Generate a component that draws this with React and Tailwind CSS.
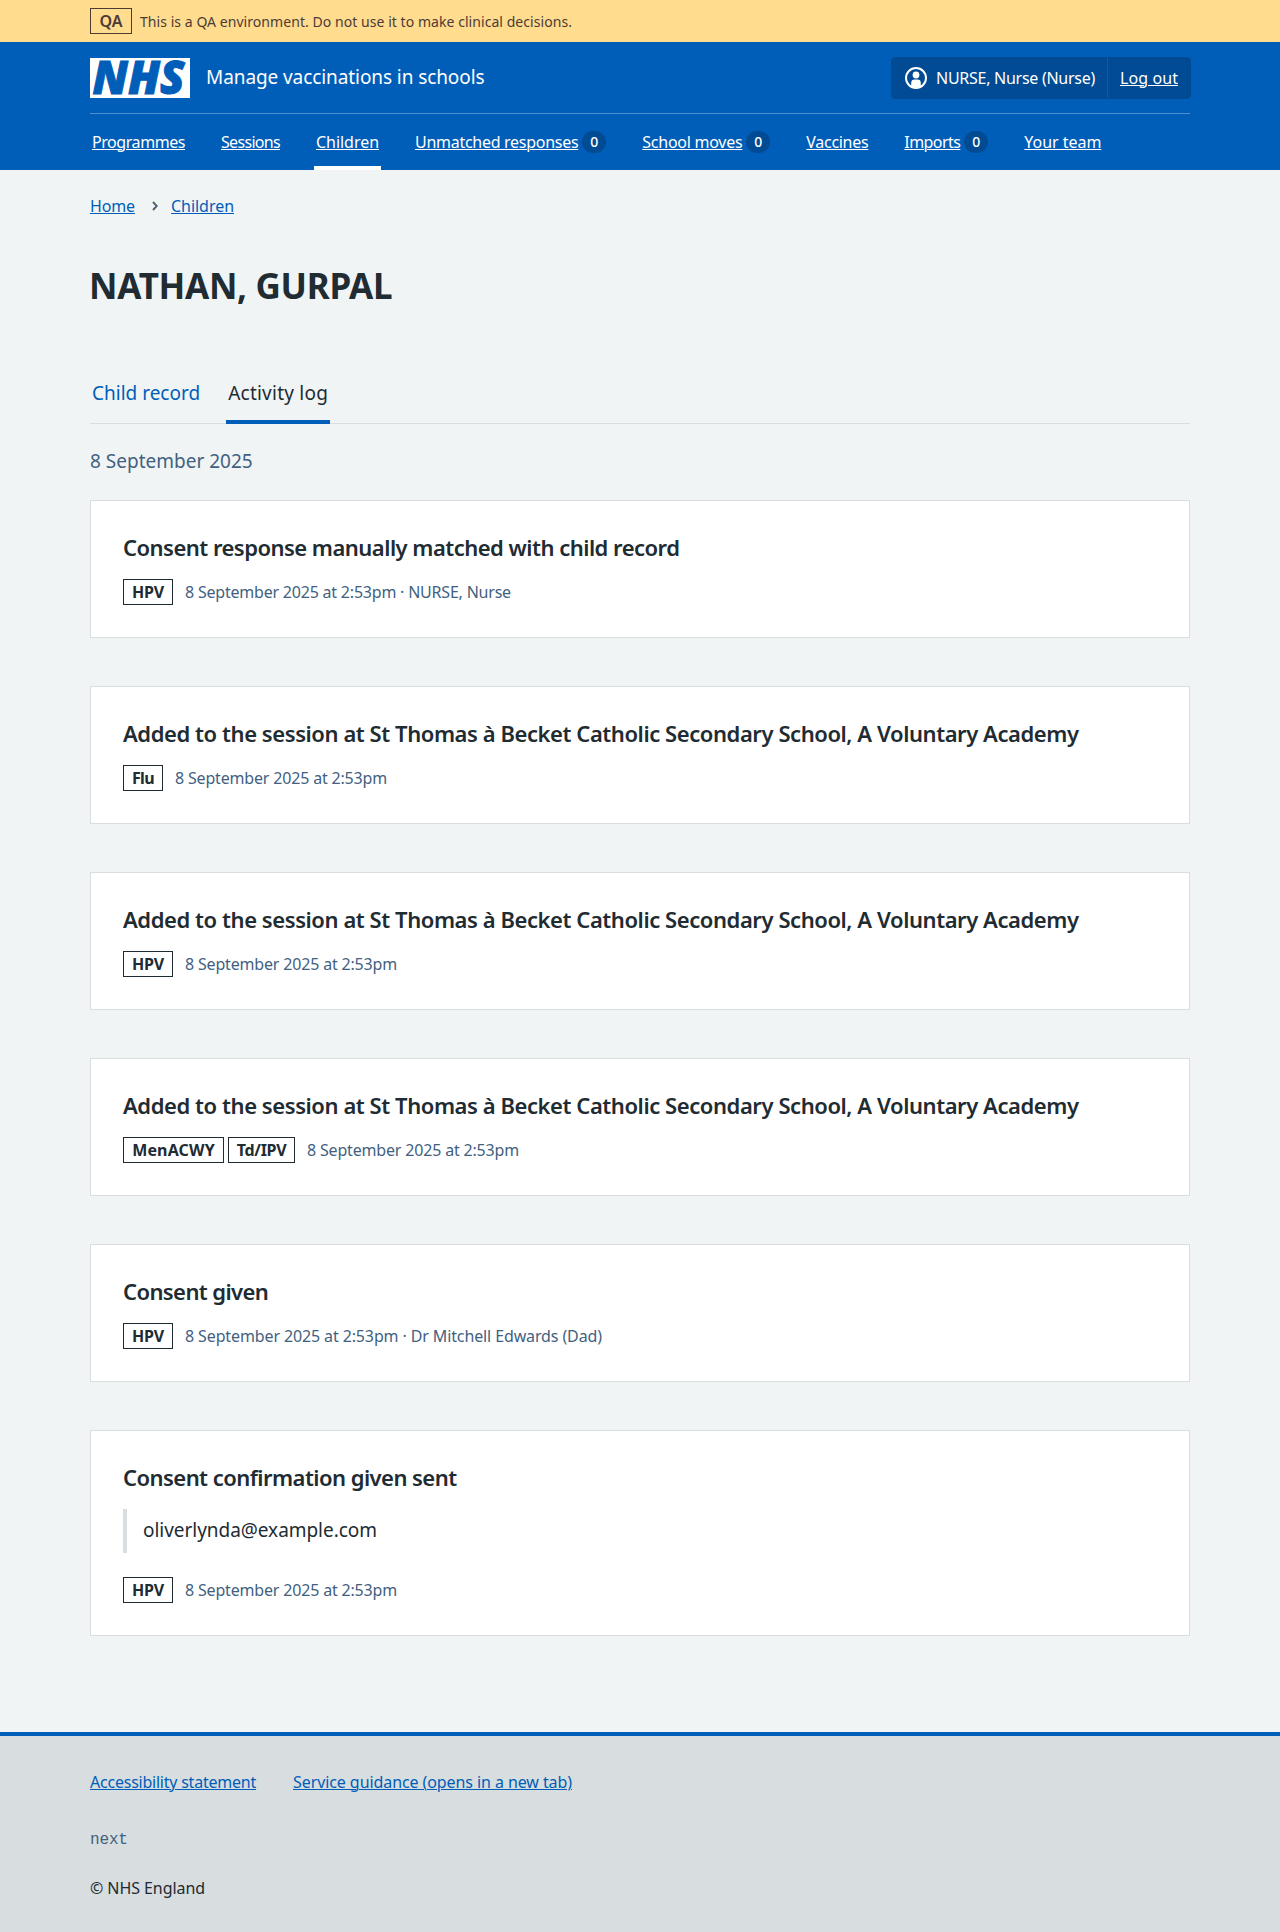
import React from "react";

const navItems = [
  { label: "Programmes", tracking: "tracking-[-0.0273em]" },
  { label: "Sessions", tracking: "tracking-[-0.043em]" },
  { label: "Children", tracking: "tracking-[-0.0023em]", active: true },
  { label: "Unmatched responses", tracking: "tracking-[-0.0175em]", count: 0 },
  { label: "School moves", tracking: "tracking-[-0.0164em]", count: 0 },
  { label: "Vaccines", tracking: "tracking-[-0.0182em]" },
  { label: "Imports", tracking: "tracking-[-0.0353em]", count: 0 },
  { label: "Your team", tracking: "tracking-[-0.0024em]" },
];

const HPV = { label: "HPV", className: "w-[50px] tracking-[-0.015em]" };
const FLU = { label: "Flu", className: "w-[40px] tracking-[-0.04em]" };
const MENACWY = { label: "MenACWY", className: "w-[101px] tracking-[0.01em]" };
const TDIPV = { label: "Td/IPV", className: "w-[67px] tracking-[-0.02em]" };

const SESSION_TITLE =
  "Added to the session at St Thomas à Becket Catholic Secondary School, A Voluntary Academy";
const TIME = "8 September 2025 at 2:53pm";

const entries = [
  {
    title: "Consent response manually matched with child record",
    titleTracking: "tracking-[-0.0236em]",
    tags: [HPV],
    meta: `${TIME} · NURSE, Nurse`,
    metaTracking: "tracking-[-0.013em]",
  },
  {
    title: SESSION_TITLE,
    titleTracking: "tracking-[-0.0196em]",
    tags: [FLU],
    meta: TIME,
    metaTracking: "tracking-[-0.011em]",
  },
  {
    title: SESSION_TITLE,
    titleTracking: "tracking-[-0.0196em]",
    tags: [HPV],
    meta: TIME,
    metaTracking: "tracking-[-0.011em]",
  },
  {
    title: SESSION_TITLE,
    titleTracking: "tracking-[-0.0196em]",
    tags: [MENACWY, TDIPV],
    meta: TIME,
    metaTracking: "tracking-[-0.011em]",
  },
  {
    title: "Consent given",
    titleTracking: "tracking-[-0.027em]",
    tags: [HPV],
    meta: `${TIME} · Dr Mitchell Edwards (Dad)`,
    metaTracking: "tracking-[-0.0075em]",
  },
  {
    title: "Consent confirmation given sent",
    titleTracking: "tracking-[-0.0248em]",
    quote: "oliverlynda@example.com",
    tags: [HPV],
    meta: TIME,
    metaTracking: "tracking-[-0.011em]",
  },
];

function Container({ className = "", children }) {
  return <div className={`mx-[90px] ${className}`}>{children}</div>;
}

function Link({ className = "", children }) {
  return (
    <a href="#" className={`whitespace-nowrap underline decoration-1 underline-offset-[1px] ${className}`}>
      {children}
    </a>
  );
}

function EnvironmentBanner() {
  return (
    <div className="h-[42px] bg-[#ffdc8e] text-[#4d3b36]">
      <Container className="flex h-full items-center">
        <strong className="flex h-[26px] w-[42px] items-center justify-center border border-[#4d3b36] font-semibold">
          QA
        </strong>
        <span className="ml-2 whitespace-nowrap pt-px text-sm tracking-[0.0039em]">
          This is a QA environment. Do not use it to make clinical decisions.
        </span>
      </Container>
    </div>
  );
}

function Logo() {
  return (
    <svg width="100" height="40" viewBox="0 0 100 40" className="block overflow-visible bg-white" aria-label="NHS">
      <text
        x="2.5"
        y="36.2"
        textLength="92"
        lengthAdjust="spacingAndGlyphs"
        className="fill-[#005eb8] stroke-[#005eb8] stroke-[1] font-['Noto_Sans'] text-[46px] font-black italic"
      >
        NHS
      </text>
    </svg>
  );
}

function UserIcon() {
  return (
    <svg width="22" height="22" viewBox="0 0 22 22" fill="none" className="block">
      <circle cx="11" cy="11" r="10" stroke="#fff" strokeWidth="2" />
      <circle cx="11" cy="8" r="3.4" fill="#fff" />
      <path d="M6.2 20v-4.2a3.4 3.4 0 0 1 3.4-3.4h2.8a3.4 3.4 0 0 1 3.4 3.4V20a10 10 0 0 1-9.6 0z" fill="#fff" />
    </svg>
  );
}

function Header() {
  return (
    <header className="bg-[#005eb8] text-white">
      <Container>
        <div className="flex h-[72px] items-start border-b border-[#4d8ecd] pt-[15px]">
          <div className="mt-px">
            <Logo />
          </div>
          <span className="ml-4 mt-[6px] whitespace-nowrap text-[19px] leading-7 tracking-[-0.0045em]">
            Manage vaccinations in schools
          </span>
          <div className="-mr-px ml-auto flex h-[42px] items-stretch rounded border border-[#004b93] bg-[#004b93]">
            <div className="flex items-center border-r border-[#005eb8] pl-[13px] pr-3">
              <UserIcon />
              <span className="ml-[9px] whitespace-nowrap tracking-[-0.0168em]">NURSE, Nurse (Nurse)</span>
            </div>
            <div className="flex items-center px-3">
              <Link className="tracking-[0.0052em]">Log out</Link>
            </div>
          </div>
        </div>
        <nav className="flex h-14 gap-8">
          {navItems.map((item) => (
            <div
              key={item.label}
              className={`flex items-center border-b-4 px-[2px] pt-1 ${
                item.active ? "border-white" : "border-transparent"
              }`}
            >
              <Link className={item.tracking}>{item.label}</Link>
              {item.count !== undefined && (
                <span className="ml-1 flex h-[22px] w-6 items-center justify-center rounded-full bg-[#004b93] text-sm font-medium">
                  {item.count}
                </span>
              )}
            </div>
          ))}
        </nav>
      </Container>
    </header>
  );
}

function Breadcrumb() {
  return (
    <div className="flex items-center pt-6 text-[#005eb8]">
      <Link className="tracking-[-0.0083em]">Home</Link>
      <svg width="6" height="10" viewBox="0 0 6 10" fill="none" className="ml-[17px] mr-[13px]">
        <path d="M1 1l3.8 4L1 9" stroke="#4c6272" strokeWidth="1.9" />
      </svg>
      <Link className="tracking-[-0.0023em]">Children</Link>
    </div>
  );
}

function Tabs() {
  return (
    <div className="mt-[71px] flex gap-6 border-b border-[#d8dde0] text-[19px] leading-7">
      <a href="#" className="-mb-px border-b-4 border-transparent px-[2px] pb-[13px] text-[#005eb8]">
        Child record
      </a>
      <a
        href="#"
        className="-mb-px border-b-4 border-[#005eb8] px-[2px] pb-[13px] tracking-[0.0125em]"
      >
        Activity log
      </a>
    </div>
  );
}

function Card({ entry }) {
  return (
    <article className="border border-[#d8dde0] bg-white px-8 pb-8 pt-[31px]">
      <h3 className={`whitespace-nowrap text-[22px] font-semibold leading-[31px] ${entry.titleTracking}`}>
        {entry.title}
      </h3>
      {entry.quote && (
        <blockquote className="mb-6 mt-4 h-11 border-l-4 border-[#d8dde0] pl-4 pt-2 text-[19px] leading-[27px] tracking-[-0.002em]">
          {entry.quote}
        </blockquote>
      )}
      <div className="mt-4 flex h-[26px] items-center">
        <div className="flex gap-1">
          {entry.tags.map((tag) => (
            <strong
              key={tag.label}
              className={`flex h-[26px] items-center justify-center border border-[#212b32] font-bold ${tag.className}`}
            >
              {tag.label}
            </strong>
          ))}
        </div>
        <span className={`ml-3 whitespace-nowrap text-[#42617f] ${entry.metaTracking}`}>{entry.meta}</span>
      </div>
    </article>
  );
}

function Footer() {
  return (
    <footer className="mt-24 border-t-4 border-[#005eb8] bg-[#d8dde0] pb-8 pt-[34px]">
      <Container>
        <div className="flex gap-[37px] text-[#005eb8]">
          <Link className="tracking-[-0.0143em]">Accessibility statement</Link>
          <Link className="tracking-[-0.0052em]">Service guidance (opens in a new tab)</Link>
        </div>
        <p className="mt-[34px] font-['Liberation_Mono',monospace] tracking-[-0.01em] text-[#42617f]">next</p>
        <p className="mt-6 tracking-[-0.0043em]">© NHS England</p>
      </Container>
    </footer>
  );
}

export default function App() {
  return (
    <div className="bg-[#f0f4f5] font-['Noto_Sans',sans-serif] text-base leading-6 text-[#212b32]">
      <EnvironmentBanner />
      <Header />
      <Container>
        <Breadcrumb />
        <h1 className="mt-[46px] -ml-px text-[35px] font-bold leading-[44px] tracking-[-0.0085em]">NATHAN, GURPAL</h1>
        <Tabs />
        <h2 className="mb-[25px] mt-[23px] text-[19px] leading-7 text-[#42617f]">
          8 September 2025
        </h2>
        <div className="flex flex-col gap-12">
          {entries.map((entry, i) => (
            <Card key={i} entry={entry} />
          ))}
        </div>
      </Container>
      <Footer />
    </div>
  );
}
